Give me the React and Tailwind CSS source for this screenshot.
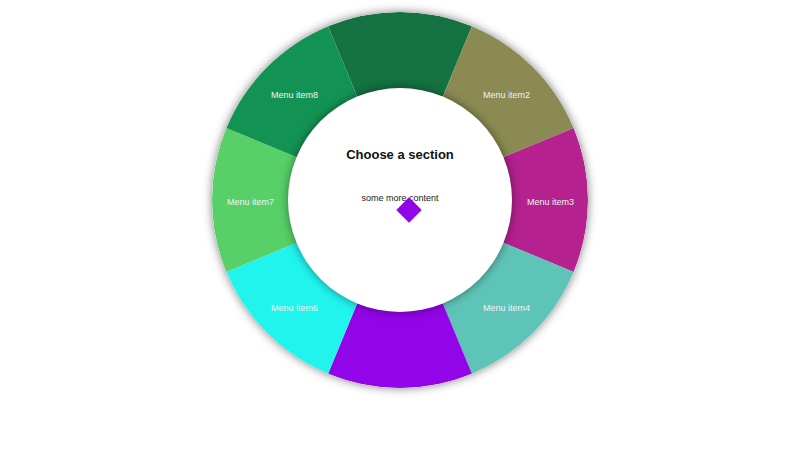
import React from 'react';

const ITEMS = [
  { label: '', color: '#147341' },
  { label: 'Menu item2', color: '#8a8a52' },
  { label: 'Menu item3', color: '#b5218e' },
  { label: 'Menu item4', color: '#5fc4b8' },
  { label: '', color: '#9205e8' },
  { label: 'Menu item6', color: '#20f4ed' },
  { label: 'Menu item7', color: '#57d068' },
  { label: 'Menu item8', color: '#139353' },
];

const R = 188;

// pie wedge path, angle 0 = top, clockwise
function wedge(i) {
  const a0 = ((i * 45 - 22.5) * Math.PI) / 180;
  const a1 = ((i * 45 + 22.5) * Math.PI) / 180;
  const x0 = R + R * Math.sin(a0);
  const y0 = R - R * Math.cos(a0);
  const x1 = R + R * Math.sin(a1);
  const y1 = R - R * Math.cos(a1);
  return `M${R},${R} L${x0},${y0} A${R},${R} 0 0 1 ${x1},${y1} Z`;
}

export default function App() {
  return (
    <div className="w-[800px] h-[450px] bg-white" style={{ fontFamily: '"Liberation Sans", Arial, sans-serif' }}>
      <div className="relative ml-[212px] pt-[12px] w-[376px]">
        <div className="relative w-[376px] h-[376px] rounded-full shadow-[0_0_10px_rgba(0,0,0,0.5)]">
          <svg width="376" height="376" viewBox="0 0 376 376" className="block rounded-full">
            {ITEMS.map((it, i) => (
              <path key={i} d={wedge(i)} fill={it.color} />
            ))}
          </svg>

          {ITEMS.map((it, i) => {
            if (!it.label) return null;
            const a = (i * 45 * Math.PI) / 180;
            const x = R + 150 * Math.sin(a) + 0.5;
            const y = R - 150 * Math.cos(a) + 1.5;
            return (
              <span
                key={i}
                className="absolute -translate-x-1/2 -translate-y-1/2 text-[9px] leading-none text-[#f2f2f2] whitespace-nowrap"
                style={{ left: x, top: y }}
              >
                {it.label}
              </span>
            );
          })}

          <div className="absolute left-[76px] top-[76px] w-[224px] h-[224px] rounded-full bg-white shadow-[0_0_10px_rgba(0,0,0,0.45)] flex flex-col items-center">
            <div className="mt-[59px] text-[13px] leading-[15px] font-bold text-[#111]">Choose a section</div>
            <div className="mt-[31px] text-[9px] leading-[11px] text-[#222]">some more content</div>
            <div className="absolute left-[112px] top-[113px] w-[18px] h-[18px] bg-[#9205e8] rotate-45" />
          </div>
        </div>
      </div>
    </div>
  );
}
